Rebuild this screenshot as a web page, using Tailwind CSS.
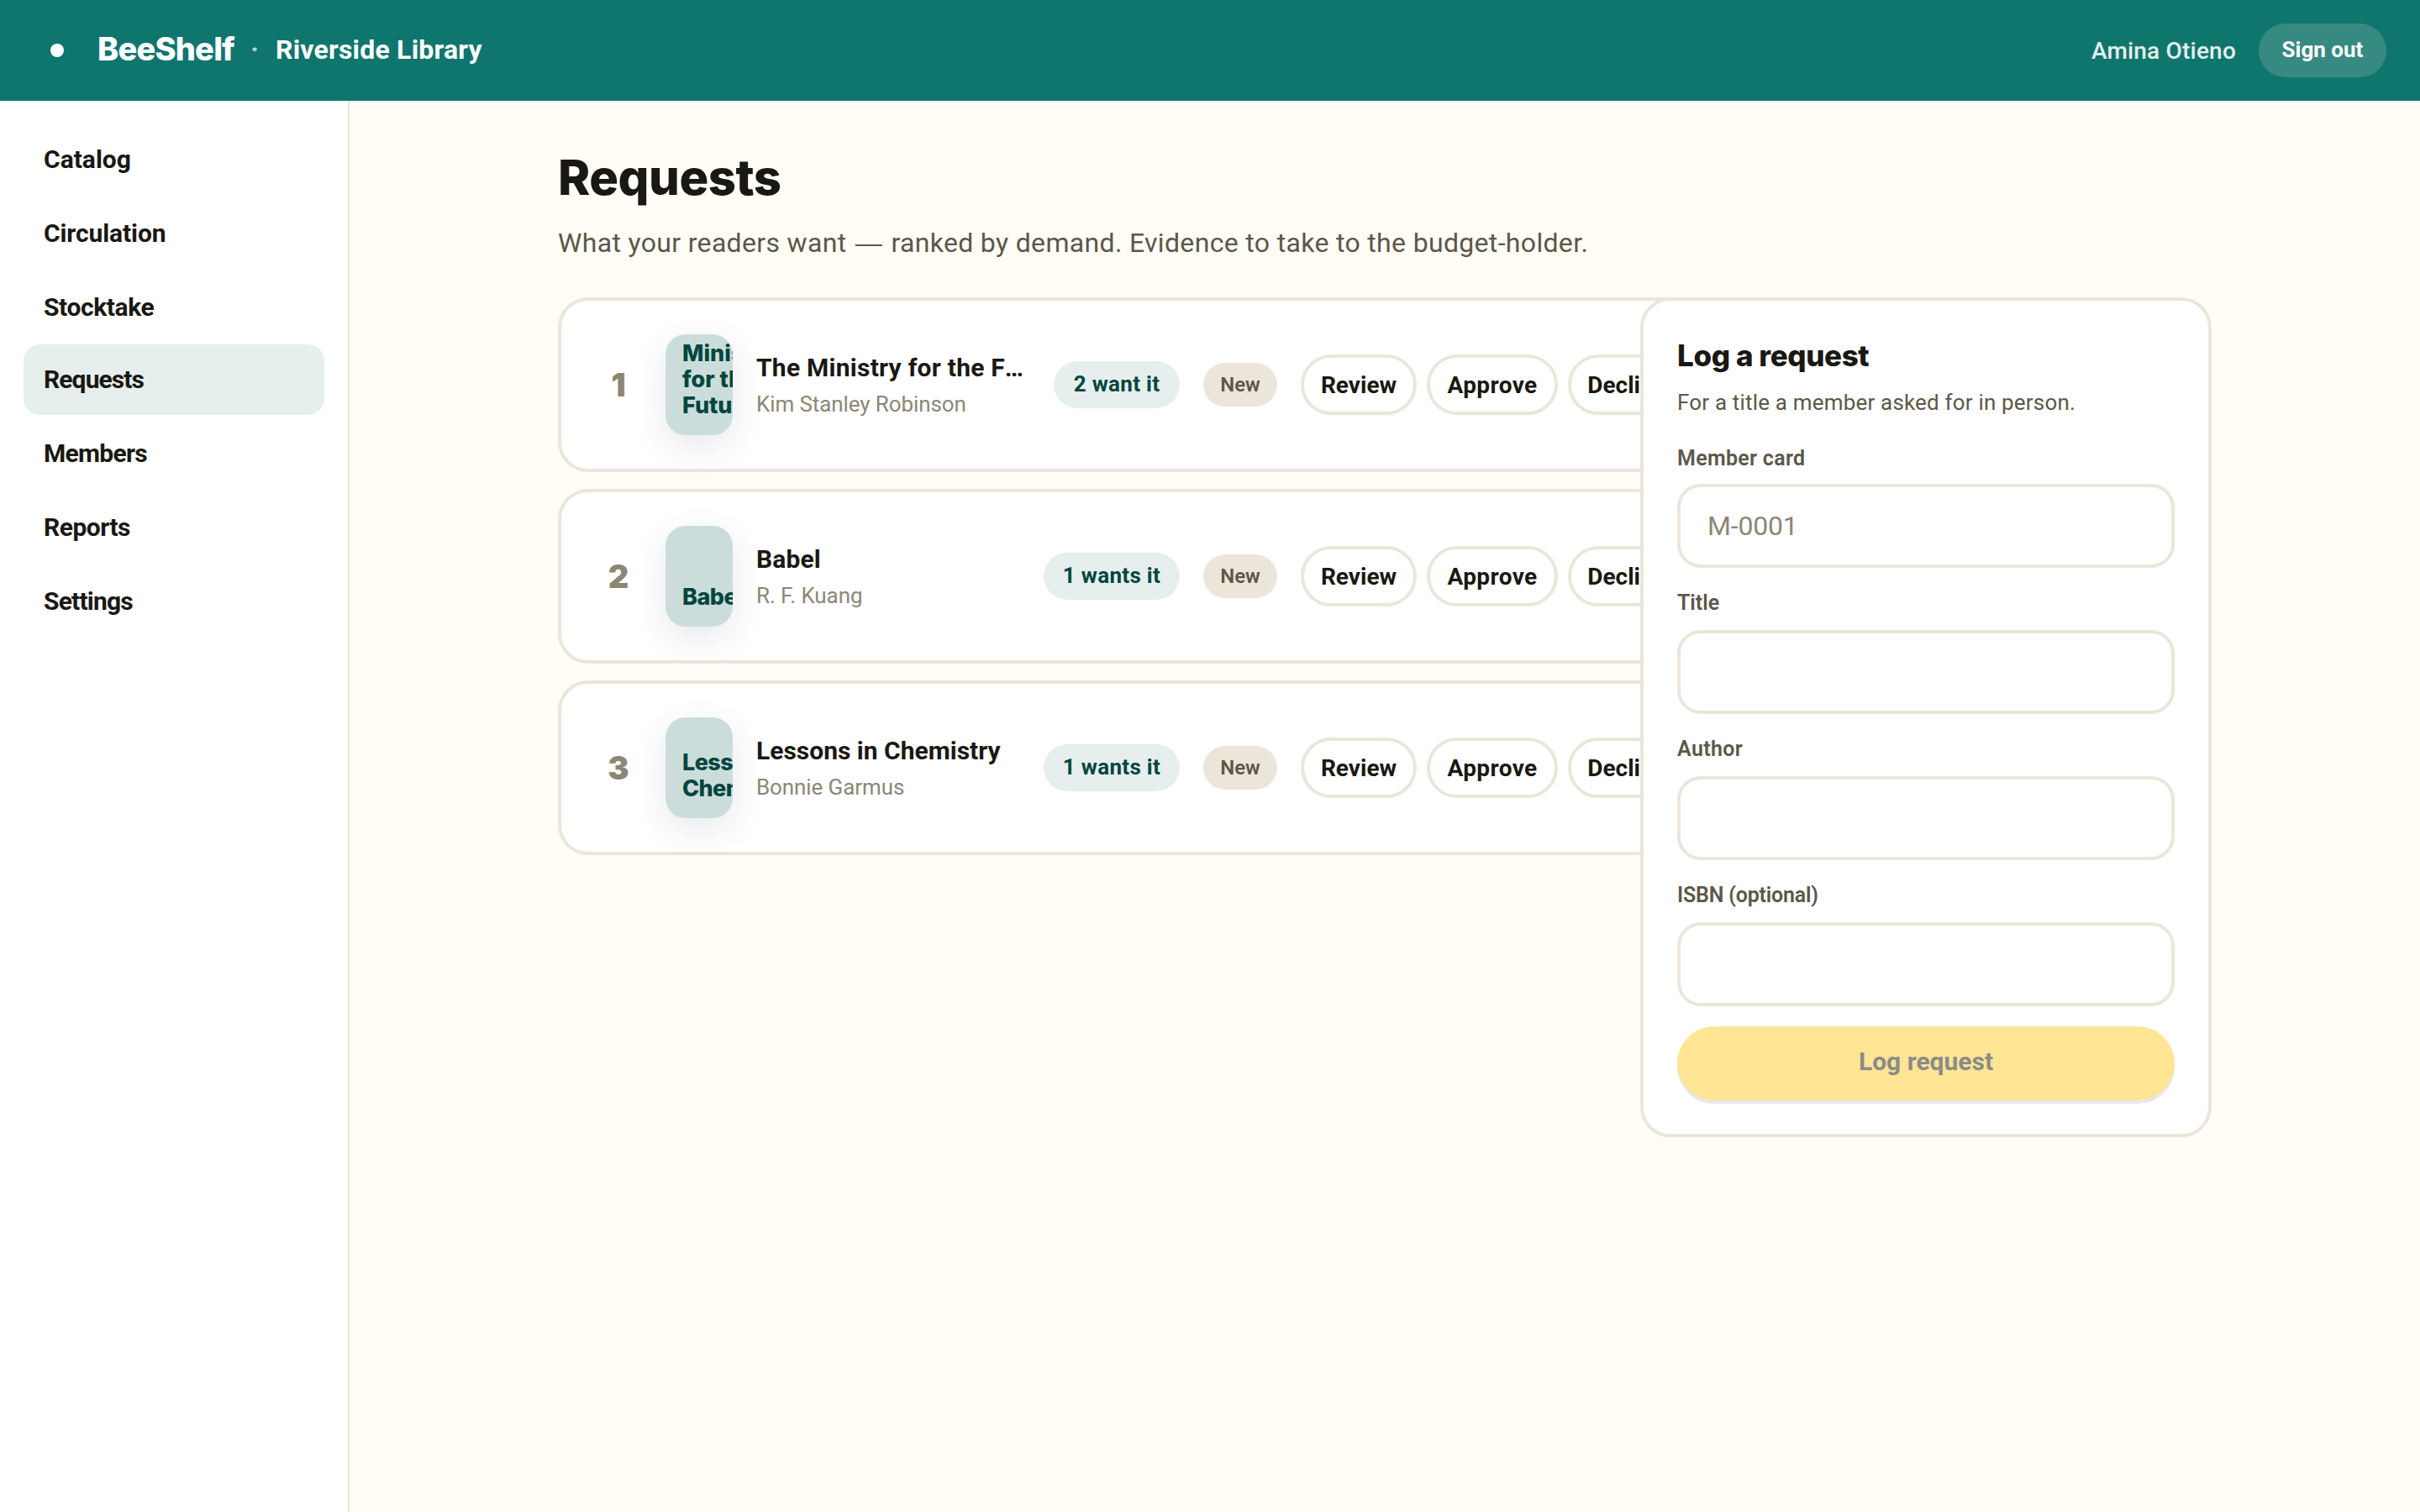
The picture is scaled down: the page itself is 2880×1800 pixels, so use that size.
<!DOCTYPE html>
<html lang="en">
<head>
<meta charset="utf-8">
<title>BeeShelf · Requests</title>
<script src="https://cdn.jsdelivr.net/npm/@tailwindcss/browser@4"></script>
</head>
<body class="flex h-[1800px] w-[2880px] flex-col overflow-hidden bg-[#fffdf6] font-[Roboto,sans-serif] text-[#1a1813]">
  <header class="flex h-[120px] shrink-0 items-center bg-[#0f766e] px-10 text-white">
    <div class="flex size-14 items-center justify-center"><span class="size-4 rounded-full bg-white"></span></div>
    <div class="mb-[3px] ml-[19px] w-[165px] whitespace-nowrap pl-px font-[Inter,sans-serif] text-[38px] font-extrabold tracking-[-0.8px]">BeeShelf</div>
    <div class="mb-1 ml-[17px] w-3 text-center text-[32px] font-bold text-white/70">·</div>
    <div class="mb-[2px] ml-[19px] whitespace-nowrap text-[32px] font-bold tracking-[0.2px]">Riverside Library</div>
    <div class="ml-auto mr-[27px] pt-px text-[28px] font-medium tracking-[0.2px] text-[#e6efed]">Amina Otieno</div>
    <button class="flex h-16 w-[152px] items-center justify-center rounded-full bg-[#378a82] pb-px text-[26px] font-bold">Sign out</button>
  </header>

  <div class="flex min-h-0 flex-1">
    <nav class="flex w-[416px] shrink-0 flex-col gap-1 border-r-2 border-[#ece6da] bg-white px-7 pt-7 text-[30px] font-bold">
      <a class="flex h-[84px] items-center rounded-[20px] px-6 pb-px">Catalog</a>
      <a class="flex h-[84px] items-center rounded-[20px] px-6 pb-px tracking-[-0.1px]">Circulation</a>
      <a class="flex h-[84px] items-center rounded-[20px] px-6 pb-px tracking-[-0.4px]">Stocktake</a>
      <a class="-mt-[2px] flex h-[84px] items-center rounded-[20px] bg-[#e6efed] px-6 pb-px tracking-[-0.9px]">Requests</a>
      <a class="flex h-[84px] items-center rounded-[20px] px-6 pb-px tracking-[-0.7px]">Members</a>
      <a class="flex h-[84px] items-center rounded-[20px] px-6 pb-px tracking-[-0.5px]">Reports</a>
      <a class="flex h-[84px] items-center rounded-[20px] px-6 pb-px tracking-[-0.8px]">Settings</a>
    </nav>

    <main class="flex-1 pl-[248px] pr-[248px] pt-[59px]">
      <h1 class="h-16 font-[Inter,sans-serif] text-[58px] font-extrabold leading-[64px] tracking-[-0.5px]">Requests</h1>
      <p class="mt-[22px] h-12 whitespace-nowrap text-[32px] leading-[48px] tracking-[0.33px] text-[#5c5748]">What your readers want <span class="mx-[2px] font-[Liberation_Sans,sans-serif]">—</span> ranked by demand. Evidence to take to the budget-holder.</p>

      <div class="mt-[41px] flex items-start">
        <ul id="requests" class="flex w-[1288px] shrink-0 flex-col gap-5"></ul>

        <section class="relative z-10 w-[680px] shrink-0 rounded-[36px] border-4 border-[#ece6da] bg-white p-10">
          <h2 class="font-[Inter,sans-serif] text-[35px] font-extrabold leading-[50px] tracking-[-0.4px]">Log a request</h2>
          <p class="mt-[11px] text-[26px] leading-[40px] tracking-[0.18px] text-[#5c5748]">For a title a member asked for in person.</p>
          <label class="mb-[11px] mt-[28px] block text-[25px] font-semibold leading-[38px] tracking-[0.3px] text-[#5c5748]">Member card</label>
          <input placeholder="M-0001" class="block h-[100px] w-full rounded-[28px] border-4 border-[#ece6da] bg-white px-8 text-[32px] tracking-[-0.2px] placeholder:text-[#8c8775]">
          <label class="mb-[13px] mt-[23px] block text-[25px] font-semibold leading-[38px] text-[#5c5748]">Title</label>
          <input class="block h-[100px] w-full rounded-[28px] border-4 border-[#ece6da] bg-white px-8 text-[32px]">
          <label class="mb-[13px] mt-[23px] block text-[25px] font-semibold leading-[38px] tracking-[0.35px] text-[#5c5748]">Author</label>
          <input class="block h-[100px] w-full rounded-[28px] border-4 border-[#ece6da] bg-white px-8 text-[32px]">
          <label class="mb-[13px] mt-[23px] block text-[25px] font-semibold leading-[38px] tracking-[-0.2px] text-[#5c5748]">ISBN (optional)</label>
          <input class="block h-[100px] w-full rounded-[28px] border-4 border-[#ece6da] bg-white px-8 text-[32px]">
          <button class="mt-6 flex h-[88px] w-full items-center justify-center rounded-full bg-[#ffe594] pb-[5px] text-[30px] font-bold text-[#8c8b89] shadow-[0_4px_0_#e8e8e9]">Log request</button>
        </section>
      </div>
    </main>
  </div>

<script>
  const requests = [
    { title: 'The Ministry for the Future', author: 'Kim Stanley Robinson', cover: ['Ministry', 'for the', 'Future'], wants: '2 want it', w: 150, gap: 0.25, coverGap: 0 },
    { title: 'Babel', author: 'R. F. Kuang', cover: ['Babel'], wants: '1 wants it', w: 162, gap: 0.1, coverGap: -0.5 },
    { title: 'Lessons in Chemistry', author: 'Bonnie Garmus', cover: ['Lessons in', 'Chemistry'], wants: '1 wants it', w: 162, gap: 0, coverGap: -0.6 },
  ];
  document.getElementById('requests').innerHTML = requests.map((r, i) => `
    <li class="flex h-[208px] w-[1400px] items-center gap-7 rounded-[36px] border-4 border-[#ece6da] bg-white px-10">
      <div class="w-14 shrink-0 text-center font-[Inter,sans-serif] text-[38px] font-black text-[#8c8775]">${i + 1}</div>
      <div class="flex h-[120px] w-20 shrink-0 flex-col justify-end overflow-hidden rounded-[24px] bg-[#cbdddb] px-5 pb-5 font-[Inter,sans-serif] text-[27px] font-extrabold leading-[31px] text-[#00463f] shadow-[0_12px_40px_rgba(25,25,70,0.10)]" style="letter-spacing:${r.coverGap}px">
        ${r.cover.map(l => `<span class="block whitespace-nowrap">${l}</span>`).join('')}
      </div>
      <div class="min-w-0 flex-1">
        <div class="truncate pt-px text-[30px] font-bold leading-[46px]" style="letter-spacing:${r.gap}px">${r.title}</div>
        <div class="-mt-px text-[26px] leading-[42px] tracking-[-0.1px] text-[#8c8775]">${r.author}</div>
      </div>
      <span class="flex h-14 shrink-0 items-center justify-center whitespace-nowrap rounded-full bg-[#e6efed] pb-[2px] text-[26px] font-bold tracking-[0.3px] text-[#00463f]" style="width:${r.w}px">${r.wants}</span>
      <span class="flex h-[52px] w-[88px] shrink-0 items-center justify-center rounded-full bg-[#ece6da] text-[24px] font-semibold text-[#5c5748]">New</span>
      <div class="flex w-[472px] shrink-0 gap-3 text-[28px] font-bold">
        <button class="h-[72px] w-[138px] shrink-0 rounded-full border-4 border-[#ece6da] bg-white pt-px">Review</button>
        <button class="h-[72px] w-[156px] shrink-0 rounded-full border-4 border-[#ece6da] bg-white pt-px tracking-[0.4px]">Approve</button>
        <button class="h-[72px] w-[140px] shrink-0 rounded-full border-4 border-[#ece6da] bg-white pt-px">Decline</button>
      </div>
    </li>`).join('');
</script>
</body>
</html>
